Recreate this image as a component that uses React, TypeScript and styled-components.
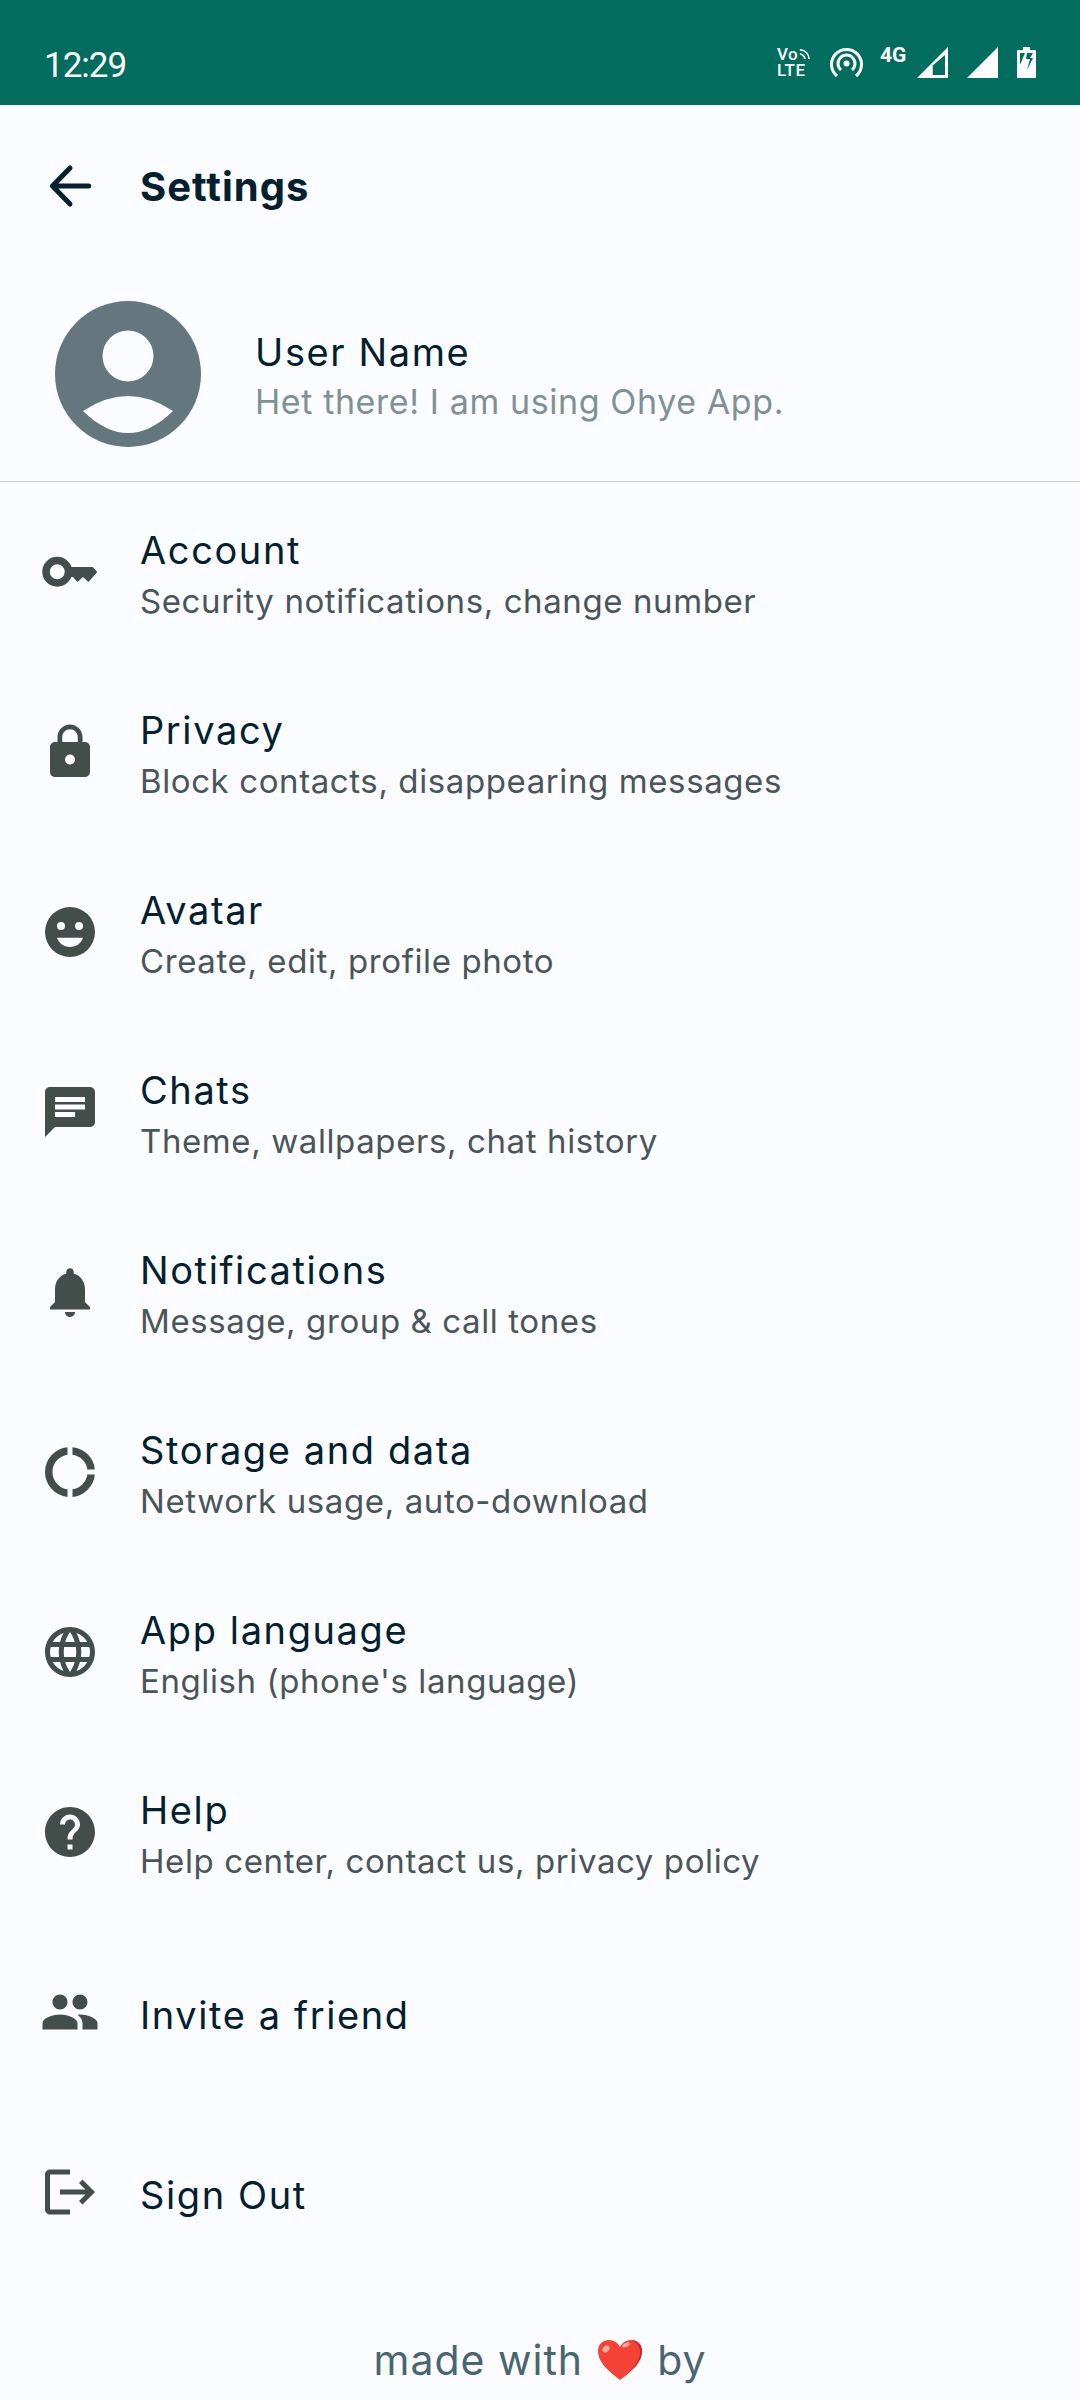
import React from "react";
import styled, { createGlobalStyle } from "styled-components";

const GlobalStyle = createGlobalStyle`
  html, body {
    margin: 0;
    padding: 0;
    height: 2400px;
    overflow: hidden;
    background: #fbfcff;
  }
  * {
    box-sizing: border-box;
  }
`;

const menuItems = [
  {
    title: "Account",
    sub: "Security notifications, change number",
    icon: <path d="M6.900 5.900a6 6 0 1 1 0 12 6 6 0 1 1 0-12zM6.900 8.900a3 3 0 1 0 0 6 3 3 0 1 0 0-6zM11.500 10h9.600l1.800 2-3.500 4-2.200-2-2.200 2-1.800-2h-1.700z" />,
  },
  {
    title: "Privacy",
    sub: "Block contacts, disappearing messages",
    icon: <path d="M18 8h-1V6c0-2.760-2.240-5-5-5S7 3.240 7 6v2H6c-1.100 0-2 .9-2 2v10c0 1.100.9 2 2 2h12c1.100 0 2-.9 2-2V10c0-1.100-.9-2-2-2zm-6 9c-1.100 0-2-.9-2-2s.9-2 2-2 2 .9 2 2-.9 2-2 2zm3.100-9H8.900V6c0-1.710 1.390-3.100 3.100-3.100 1.710 0 3.100 1.390 3.100 3.100v2z" />,
  },
  {
    title: "Avatar",
    sub: "Create, edit, profile photo",
    icon: <path fillRule="evenodd" d="M12 2a10 10 0 1 0 0 20 10 10 0 0 0 0-20zM8.400 8a1.600 1.600 0 1 1 0 3.200 1.600 1.600 0 0 1 0-3.200zm7.200 0a1.600 1.600 0 1 1 0 3.200 1.600 1.600 0 0 1 0-3.200zM12 18c-2.500 0-4.500-1.500-5.200-3.700h10.400C16.500 16.500 14.500 18 12 18z" />,
  },
  {
    title: "Chats",
    sub: "Theme, wallpapers, chat history",
    icon: <path d="M20 2H4c-1.100 0-1.990.9-1.990 2L2 22l4-4h14c1.100 0 2-.9 2-2V4c0-1.100-.9-2-2-2zM6 9h12v2H6V9zm8 5H6v-2h8v2zm4-6H6V6h12v2z" />,
  },
  {
    title: "Notifications",
    sub: "Message, group & call tones",
    icon: <path d="M12 22c1.100 0 2-.9 2-2h-4c0 1.100.89 2 2 2zm6-6v-5c0-3.070-1.640-5.640-4.500-6.320V4c0-.83-.67-1.500-1.500-1.500s-1.500.67-1.500 1.500v.68C7.630 5.360 6 7.920 6 11v5l-2 2v1h16v-1l-2-2z" />,
  },
  {
    title: "Storage and data",
    sub: "Network usage, auto-download",
    icon: <path d="M11 2.050v3.020A7 7 0 0 0 11 18.930v3.020A10 10 0 0 1 11 2.050zM13 2.050A10 10 0 0 1 21.950 11H18.930A7 7 0 0 0 13 5.070zM21.950 13A10 10 0 0 1 13 21.950V18.930A7 7 0 0 0 18.930 13z" />,
  },
  {
    title: "App language",
    sub: "English (phone's language)",
    icon: <path d="M11.990 2C6.470 2 2 6.480 2 12s4.470 10 9.990 10C17.520 22 22 17.520 22 12S17.520 2 11.990 2zm6.930 6h-2.950c-.32-1.250-.78-2.450-1.380-3.560 1.840.63 3.370 1.910 4.330 3.560zM12 4.040c.83 1.200 1.480 2.530 1.910 3.960h-3.820c.43-1.430 1.080-2.760 1.910-3.960zM4.260 14C4.100 13.360 4 12.690 4 12s.1-1.360.26-2h3.380c-.08.66-.14 1.320-.14 2 0 .68.06 1.340.14 2H4.260zm.82 2h2.950c.32 1.250.78 2.450 1.380 3.560-1.840-.63-3.370-1.900-4.330-3.560zm2.950-8H5.080c.96-1.660 2.490-2.930 4.330-3.560C8.810 5.550 8.350 6.750 8.030 8zM12 19.960c-.83-1.200-1.480-2.530-1.910-3.960h3.820c-.43 1.430-1.080 2.760-1.910 3.960zM14.340 14H9.660c-.09-.66-.16-1.320-.16-2 0-.68.07-1.350.16-2h4.680c.09.65.16 1.320.16 2 0 .68-.07 1.340-.16 2zm.25 5.560c.6-1.110 1.060-2.310 1.380-3.560h2.950c-.96 1.650-2.490 2.930-4.330 3.560zM16.360 14c.08-.66.14-1.320.14-2 0-.68-.06-1.340-.14-2h3.380c.16.64.26 1.310.26 2s-.1 1.360-.26 2h-3.380z" />,
  },
  {
    title: "Help",
    sub: "Help center, contact us, privacy policy",
    icon: <path d="M12 2C6.480 2 2 6.480 2 12s4.480 10 10 10 10-4.480 10-10S17.520 2 12 2zm1 17h-2v-2h2v2zm2.070-7.750l-.9.92C13.450 12.900 13 13.500 13 15h-2v-.5c0-1.100.45-2.100 1.170-2.830l1.240-1.260c.37-.36.59-.86.59-1.410 0-1.100-.9-2-2-2s-2 .9-2 2H8c0-2.210 1.790-4 4-4s4 1.790 4 4c0 .88-.36 1.680-.93 2.250z" />,
  },
  {
    title: "Invite a friend",
    icon: <path d="M16 11c1.660 0 2.990-1.340 2.990-3S17.660 5 16 5c-1.660 0-3 1.340-3 3s1.340 3 3 3zm-8 0c1.660 0 2.990-1.340 2.990-3S9.660 5 8 5C6.340 5 5 6.340 5 8s1.340 3 3 3zm0 2c-2.330 0-7 1.170-7 3.500V19h14v-2.500c0-2.330-4.670-3.500-7-3.500zm8 0c-.29 0-.62.02-.97.05 1.160.84 1.970 1.970 1.970 3.450V19h6v-2.500c0-2.330-4.670-3.500-7-3.500z" />,
  },
  {
    title: "Sign Out",
    icon: <path d="M4 21c-1.100 0-2-.9-2-2V5c0-1.100.9-2 2-2h8v2H4v14h8v2H4zM17 17l-1.400-1.400 2.600-2.600H8v-2h10.200l-2.600-2.600L17 7l5 5-5 5z" />,
  },
];

function App() {
  return (
    <>
      <GlobalStyle />
      <Page>
        <StatusBar>
          <Clock>12:29</Clock>
          <StatusIcons>
            <VoLte>
              <VoLine>
                Vo
                <svg width="14" height="14" viewBox="0 0 14 14" fill="none" stroke="#fff" strokeWidth="2">
                  <path d="M1 2c6 0 11 5 11 11M1 7c3 0 6 3 6 6" />
                </svg>
              </VoLine>
              <span>LTE</span>
            </VoLte>
            <svg width="33" height="31" viewBox="0 0 33 31" fill="none" stroke="#fff" strokeWidth="3">
              <path d="M7 29A15 15 0 1 1 26 29" />
              <path d="M11 23A8.500 8.500 0 1 1 22 23" />
              <circle cx="16.500" cy="16.500" r="3" fill="#fff" stroke="none" />
            </svg>
            <FourG>4G</FourG>
            <svg width="31" height="31" viewBox="0 0 31 31" fill="#fff">
              <path fillRule="evenodd" d="M31 0v31H0zM15.700 28V18.500L28 8v20z" />
            </svg>
            <svg width="31" height="31" viewBox="0 0 31 31" fill="#fff">
              <path d="M31 0v31H0z" />
            </svg>
            <svg width="19" height="31" viewBox="0 0 19 31" fill="#fff">
              <path fillRule="evenodd" d="M6 0h7v3h5c.6 0 1 .4 1 1v26c0 .6-.4 1-1 1H1c-.6 0-1-.4-1-1V4c0-.6.4-1 1-1h5zM3 6v12l5-12zM16 6h-6l-1 6h4l-3 11 6-12h-3z" />
            </svg>
          </StatusIcons>
        </StatusBar>

        <TopBar>
          <IconSlot>
            <svg width="60" height="60" viewBox="0 0 24 24" fill="none" stroke="#04202e" strokeWidth="2" strokeLinecap="round" strokeLinejoin="round">
              <path d="M5 12h14.500M12 4.800L5 12l7 7.200" />
            </svg>
          </IconSlot>
          <PageTitle>Settings</PageTitle>
        </TopBar>

        <Profile>
          <svg width="146" height="146" viewBox="0 0 146 146">
            <circle cx="73" cy="73" r="73" fill="#64767e" />
            <circle cx="73" cy="55" r="25.500" fill="#fbfcff" />
            <path d="M28 110Q73 80 118 110Q73 154 28 110z" fill="#fbfcff" />
          </svg>
          <TextBlock>
            <ProfileName>User Name</ProfileName>
            <ProfileStatus>Het there! I am using Ohye App.</ProfileStatus>
          </TextBlock>
        </Profile>

        <MenuList>
          {menuItems.map((item) => (
            <Row key={item.title}>
              <IconSlot>
                <svg width="60" height="60" viewBox="0 0 24 24" fill="#434d4a">
                  {item.icon}
                </svg>
              </IconSlot>
              <TextBlock>
                <RowTitle>{item.title}</RowTitle>
                {item.sub && <RowSub>{item.sub}</RowSub>}
              </TextBlock>
            </Row>
          ))}
        </MenuList>

        <Footer>
          made with
          <svg width="46" height="42" viewBox="0 0 46 42">
            <path d="M23 41C10 31 1 23 1 12 1 5 6 1 12 1c5 0 9 3 11 7 2-4 6-7 11-7 6 0 11 4 11 11 0 11-9 19-22 29z" fill="#f44336" />
            <path d="M34 1c6 0 11 4 11 11 0 11-9 19-22 29 10-9 20-17 20-28 0-6-4-10-9-12z" fill="#c62828" />
            <ellipse cx="9" cy="10" rx="4" ry="3" fill="#f8a9a3" transform="rotate(-40 9 10)" />
            <ellipse cx="29" cy="6" rx="4" ry="2" fill="#f8a9a3" transform="rotate(-25 29 6)" />
          </svg>
          by
        </Footer>
      </Page>
    </>
  );
}

export default App;

const Page = styled.div`
  width: 1080px;
  height: 2400px;
  overflow: hidden;
  background: #fbfcff;
  font-family: Inter, "Noto Sans", sans-serif;
`;

const StatusBar = styled.div`
  display: flex;
  align-items: center;
  justify-content: space-between;
  height: 105px;
  padding: 22px 44px 0 44px;
  background: #026c5e;
  color: #fff;
`;

const Clock = styled.span`
  margin-top: 3px;
  font-family: Roboto, sans-serif;
  font-size: 35px;
  letter-spacing: -1px;
`;

const StatusIcons = styled.div`
  display: flex;
  align-items: flex-end;
  gap: 19px;
  margin-bottom: 4px;
`;

const VoLte = styled.div`
  display: flex;
  flex-direction: column;
  width: 34px;
  font-family: Roboto, sans-serif;
  font-size: 17px;
  font-weight: 500;
  letter-spacing: 0.5px;
  line-height: 16px;
`;

const VoLine = styled.div`
  display: flex;
  align-items: center;
  gap: 1px;
`;

const FourG = styled.span`
  align-self: flex-start;
  width: 29px;
  margin: 0 -11px 0 -2px;
  font-family: Roboto, sans-serif;
  font-size: 21px;
  font-weight: 700;
  line-height: 18px;
`;

const TopBar = styled.header`
  display: flex;
  align-items: center;
  gap: 40px;
  height: 162px;
  padding-left: 40px;
`;

const IconSlot = styled.div`
  display: flex;
  flex: none;
  width: 60px;
  height: 60px;
`;

const PageTitle = styled.h1`
  margin: 0;
  color: #04202e;
  font-size: 40px;
  font-weight: 700;
  letter-spacing: 1px;
`;

const Profile = styled.section`
  display: flex;
  align-items: center;
  gap: 54px;
  height: 215px;
  padding-left: 55px;
  border-bottom: 1px solid #c4c8cc;
`;

const TextBlock = styled.div`
  padding-top: 6px;
`;

const ProfileName = styled.div`
  color: #04202e;
  font-size: 38px;
  line-height: 49px;
  letter-spacing: 1.600px;
`;

const ProfileStatus = styled.div`
  color: #7f9097;
  font-size: 34px;
  line-height: 49px;
  letter-spacing: 0.6px;
`;

const MenuList = styled.ul`
  margin: 0;
  padding: 0;
  list-style: none;
`;

const Row = styled.li`
  display: flex;
  align-items: center;
  gap: 40px;
  height: 180px;
  padding-left: 40px;
`;

const RowTitle = styled.div`
  color: #04202e;
  font-size: 38px;
  line-height: 49px;
  letter-spacing: 1.600px;
`;

const RowSub = styled.div`
  margin-top: 2px;
  margin-bottom: -2px;
  color: #4a5559;
  font-size: 33px;
  line-height: 49px;
  letter-spacing: 0.6px;
`;

const Footer = styled.footer`
  display: flex;
  align-items: center;
  justify-content: center;
  gap: 14px;
  margin-top: 53px;
  color: #4a6572;
  font-size: 41px;
  line-height: 50px;
  letter-spacing: 1px;
`;
